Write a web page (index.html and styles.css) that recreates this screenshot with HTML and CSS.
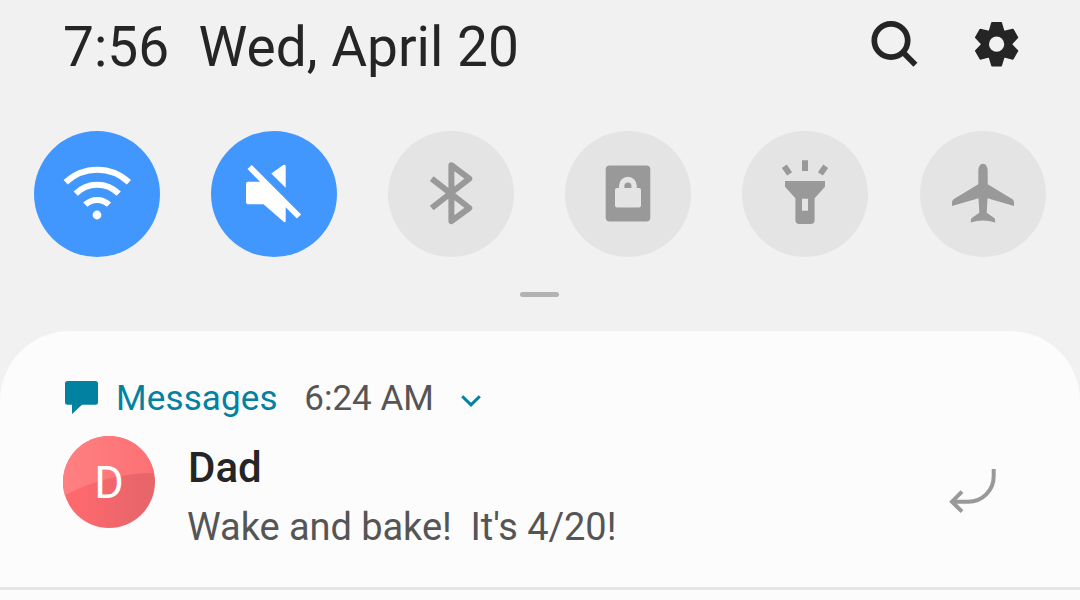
FILE: index.html
```
<!DOCTYPE html>
<html lang="en">
<head>
    <meta charset="UTF-8">
    <meta name="viewport" content="width=device-width, initial-scale=1.0">
    <title>Notification Panel</title>
    <link rel="stylesheet" href="styles.css">
</head>
<body>

<header class="status">
    <span class="clock">7:56</span>
    <span class="date">Wed, April 20</span>
    <div class="actions">
        <svg class="search" width="48" height="48" viewBox="0 0 48 48">
            <circle cx="21" cy="20.5" r="16.7"/>
            <path d="M33 32.3L45.4 44.7"/>
        </svg>
        <svg class="gear" width="48" height="48" viewBox="-23.6 -24.2 48 48">
            <circle r="15"/>
            <path d="M-4.6-21.4H4.6L6.8-14V14L4.6 21.4H-4.6L-6.8 14V-14Z"/>
            <path d="M-4.6-21.4H4.6L6.8-14V14L4.6 21.4H-4.6L-6.8 14V-14Z" transform="rotate(60)"/>
            <path d="M-4.6-21.4H4.6L6.8-14V14L4.6 21.4H-4.6L-6.8 14V-14Z" transform="rotate(120)"/>
            <circle class="hole" r="7.6"/>
        </svg>
    </div>
</header>

<div class="toggles">
    <div class="toggle on">
        <svg viewBox="0 0 126 126">
            <g class="line">
                <path d="M31.7 51.3A46 46 0 0 1 94.9 51.3"/>
                <path d="M41.7 62.7A30.4 30.4 0 0 1 84.7 62.7"/>
                <path d="M51.3 73.7A17 17 0 0 1 75 73.7"/>
            </g>
            <circle cx="63" cy="84" r="4.4"/>
        </svg>
    </div>
    <div class="toggle on">
        <svg viewBox="0 0 126 126">
            <path d="M37 50.7H51L74.7 74V90Q74.7 92 72.7 90.8L52.5 73.3H37Q35 73.3 35 71.3V52.7Q35 50.7 37 50.7Z"/>
            <path d="M60.3 42.5L72.2 34Q74.7 33 74.7 35.5V56.8Z"/>
            <path class="line" d="M38.6 36L88 85.5"/>
        </svg>
    </div>
    <div class="toggle">
        <svg viewBox="0 0 126 126">
            <path class="line round" d="M43.7 47.7L81.3 77L63.4 90.2V34.2L81.3 47.7L43.7 77"/>
        </svg>
    </div>
    <div class="toggle">
        <svg viewBox="0 0 126 126">
            <rect x="40.7" y="34.4" width="44.6" height="56" rx="4"/>
            <g class="cut">
                <rect x="50" y="56.9" width="26" height="19.6" rx="2"/>
                <path d="M54 58V54.7A8.9 8.9 0 0 1 71.8 54.7V58Z"/>
            </g>
            <path d="M59.4 57V55A3.5 3.5 0 0 1 66.4 55V57Z"/>
        </svg>
    </div>
    <div class="toggle">
        <svg viewBox="0 0 126 126">
            <path class="line" d="M63 29.3V40M42.3 35.3L47.6 42.9M83.7 35.3L78.4 42.9"/>
            <path d="M43 50H83V55.7L72.6 67.3V89Q72.6 93 68.6 93H57.4Q53.4 93 53.4 89V67.3L43 55.7Z"/>
            <rect class="cut" x="60" y="67.7" width="6" height="12"/>
        </svg>
    </div>
    <div class="toggle">
        <svg viewBox="0 0 126 126">
            <path d="M63 32.7C66 32.7 67.7 36 67.7 40V53.3L92.5 68.3Q94 69.5 94 71.5V75L67.5 67.3L66.7 81.7L74.2 87Q75.3 88 75.3 91.4Q69 89.5 63 89.5T50.7 91.4Q50.7 88 51.8 87L59.3 81.7L58.5 67.3L32 75V71.5Q32 69.5 33.5 68.3L58.3 53.3V40C58.3 36 60 32.7 63 32.7Z"/>
        </svg>
    </div>
</div>

<div class="handle"></div>

<main class="notifications">
    <div class="app">
        <svg class="bubble" width="34" height="34" viewBox="0 0 34 34">
            <path d="M2.5 0H30.5Q33 0 33 2.5V21.2Q33 23.7 30.5 23.7H17L7 33V23.7H2.5Q0 23.7 0 21.2V2.5Q0 0 2.5 0Z"/>
        </svg>
        <span class="app-name">Messages</span>
        <span class="time">6:24 AM</span>
        <svg class="chevron" width="20" height="12" viewBox="0 0 20 12">
            <path d="M1.2 1.2L10 9.8L18.8 1.2"/>
        </svg>
    </div>
    <div class="message">
        <div class="avatar">
            <svg viewBox="0 0 92 92">
                <defs>
                    <linearGradient id="low">
                        <stop offset="0.15" stop-color="#ff696e"/>
                        <stop offset="0.8" stop-color="#e8666a"/>
                    </linearGradient>
                    <linearGradient id="high">
                        <stop offset="0" stop-color="#ff8082"/>
                        <stop offset="1" stop-color="#fc7074"/>
                    </linearGradient>
                </defs>
                <rect width="92" height="92" fill="url(#low)"/>
                <path d="M0 60Q44 37 92 37V0H0Z" fill="url(#high)"/>
            </svg>
            <span>D</span>
        </div>
        <div class="content">
            <div class="sender">Dad</div>
            <div class="text">Wake and bake!&nbsp; It's 4/20!</div>
        </div>
        <svg class="reply" width="50" height="46" viewBox="0 0 50 46">
            <path d="M45.7 1V8C45.7 22 35 33.7 20 33.7H4M14 23.7L4 33.7L14 43.7"/>
        </svg>
    </div>
</main>

</body>
</html>
```
FILE: styles.css
```
* {
    box-sizing: border-box;
}
body {
    margin: 0;
    height: 600px;
    overflow: hidden;
    background-color: #f1f1f1;
    color: #252525;
    font-family: Roboto, sans-serif;
}
svg {
    display: block;
}
.status {
    display: flex;
    height: 131px;
    padding: 14px 59px 0 63px;
    font-size: 55px;
    line-height: 66px;
    white-space: nowrap;
}
.date {
    margin-left: 29.5px;
}
.actions {
    display: flex;
    gap: 55px;
    margin-left: auto;
    padding-top: 6px;
}
.search {
    fill: none;
    stroke: #252525;
    stroke-width: 5.7;
}
.gear {
    fill: #252525;
    stroke: #252525;
    stroke-width: 1.6;
    stroke-linejoin: round;
}
.gear .hole {
    fill: #f1f1f1;
    stroke: none;
}
.toggles {
    display: flex;
    gap: 51.11px;
    padding: 0 34px;
}
.toggle {
    flex: none;
    width: 126px;
    height: 126px;
    border-radius: 50%;
    background-color: #e4e4e4;
    fill: #999;
    stroke: #999;
    stroke-width: 0;
}
.toggle.on {
    background-color: #4297ff;
    fill: #fff;
    stroke: #fff;
}
.toggle .line {
    fill: none;
    stroke-width: 6;
}
.toggle .round {
    stroke-linejoin: round;
}
.toggle .cut {
    fill: #e4e4e4;
}
.handle {
    width: 39px;
    height: 5px;
    margin: 35px 0 34px 520px;
    border-radius: 3px;
    background-color: #b3b3b3;
}
.notifications {
    height: 269px;
    padding: 50px 82px 0 63px;
    border-radius: 70px 70px 0 0;
    background: linear-gradient(#e6e6e6, #e6e6e6) 0 256px / 100% 3px no-repeat #fcfcfc;
}
.app {
    display: flex;
    height: 55px;
    padding-left: 2px;
    font-size: 35px;
    line-height: 36px;
}
.bubble {
    fill: #0381a1;
}
.app-name {
    margin-left: 17px;
    color: #0381a1;
    letter-spacing: 0.15px;
}
.time {
    margin-left: 26.5px;
    color: #555;
}
.chevron {
    margin: 14px 0 0 27.5px;
    fill: none;
    stroke: #0381a1;
    stroke-width: 3;
}
.message {
    display: flex;
}
.avatar {
    display: grid;
    width: 92px;
    height: 92px;
    border-radius: 50%;
    overflow: hidden;
    color: #fff;
    font-size: 45px;
    line-height: 94px;
    text-align: center;
}
.avatar svg,
.avatar span {
    grid-area: 1 / 1;
}
.content {
    margin-left: 32px;
}
.sender {
    padding: 7px 0 0 1px;
    font-size: 42px;
    font-weight: 500;
    line-height: 50px;
}
.text {
    padding-top: 9px;
    color: #555;
    font-size: 38px;
    letter-spacing: -0.06px;
    line-height: 50px;
    white-space: nowrap;
}
.reply {
    margin: 32px 0 0 auto;
    fill: none;
    stroke: #999;
    stroke-width: 4;
}
```
